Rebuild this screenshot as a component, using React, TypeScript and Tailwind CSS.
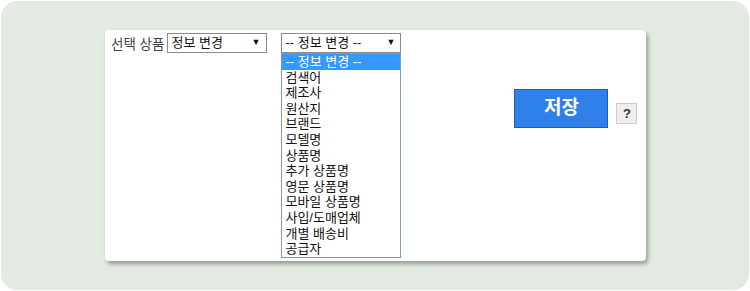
import React from 'react';

const options = [
  '-- 정보 변경 --',
  '검색어',
  '제조사',
  '원산지',
  '브랜드',
  '모델명',
  '상품명',
  '추가 상품명',
  '영문 상품명',
  '모바일 상품명',
  '사입/도매업체',
  '개별 배송비',
  '공급자',
];

const font = { fontFamily: '"Liberation Sans", "Noto Sans CJK KR", sans-serif' };

const App = () => {
  return (
    <div className="w-[750px] h-[291px] bg-white p-px" style={font}>
      <div className="h-full rounded-2xl bg-[#e3eae2] pt-[29px] pl-[104px]">
        {/* Card */}
        <div className="w-[541px] h-[231px] bg-white rounded-[4px] shadow-[2px_3px_4px_rgba(0,0,0,0.35)] flex items-start pl-[6px] pt-[3px] text-[13px] text-[#333]">
          <span className="mt-[2px] mr-[3px] text-[13.5px] text-[#444]">선택 상품</span>
          <div className="w-[100px] h-[20px] border border-[#8a8a8a] flex items-center justify-between pl-[3px] pr-[6px] text-[#111]">
            <span>정보 변경</span>
            <span className="text-[9px]">▼</span>
          </div>

          {/* Open select */}
          <div className="ml-[14px] w-[120px] flex flex-col">
            <div className="h-[20px] border border-[#8a8a8a] flex items-center justify-between pl-[3px] pr-[5px] text-[#111]">
              <span>-- 정보 변경 --</span>
              <span className="text-[9px]">▼</span>
            </div>
            <ul className="border border-[#7f9db9] bg-white">
              {options.map((opt, i) => (
                <li
                  key={opt}
                  className={`h-[15.6px] leading-[15.6px] pl-[3px] whitespace-nowrap ${
                    i === 0 ? 'bg-[#3399ff] text-white' : 'text-[#111]'
                  }`}
                >
                  {opt}
                </li>
              ))}
            </ul>
          </div>

          <button className="ml-[113px] mt-[56px] w-[94px] h-[39px] bg-[#2f80e8] border border-[#1c5fb8] text-white text-[19px] font-bold">
            저장
          </button>
          <button className="ml-[8px] mt-[70px] w-[21px] h-[21px] bg-[#eeeeee] border border-[#cccccc] text-[#333] text-[13px] font-bold leading-none">
            ?
          </button>
        </div>
      </div>
    </div>
  );
};

export default App;
